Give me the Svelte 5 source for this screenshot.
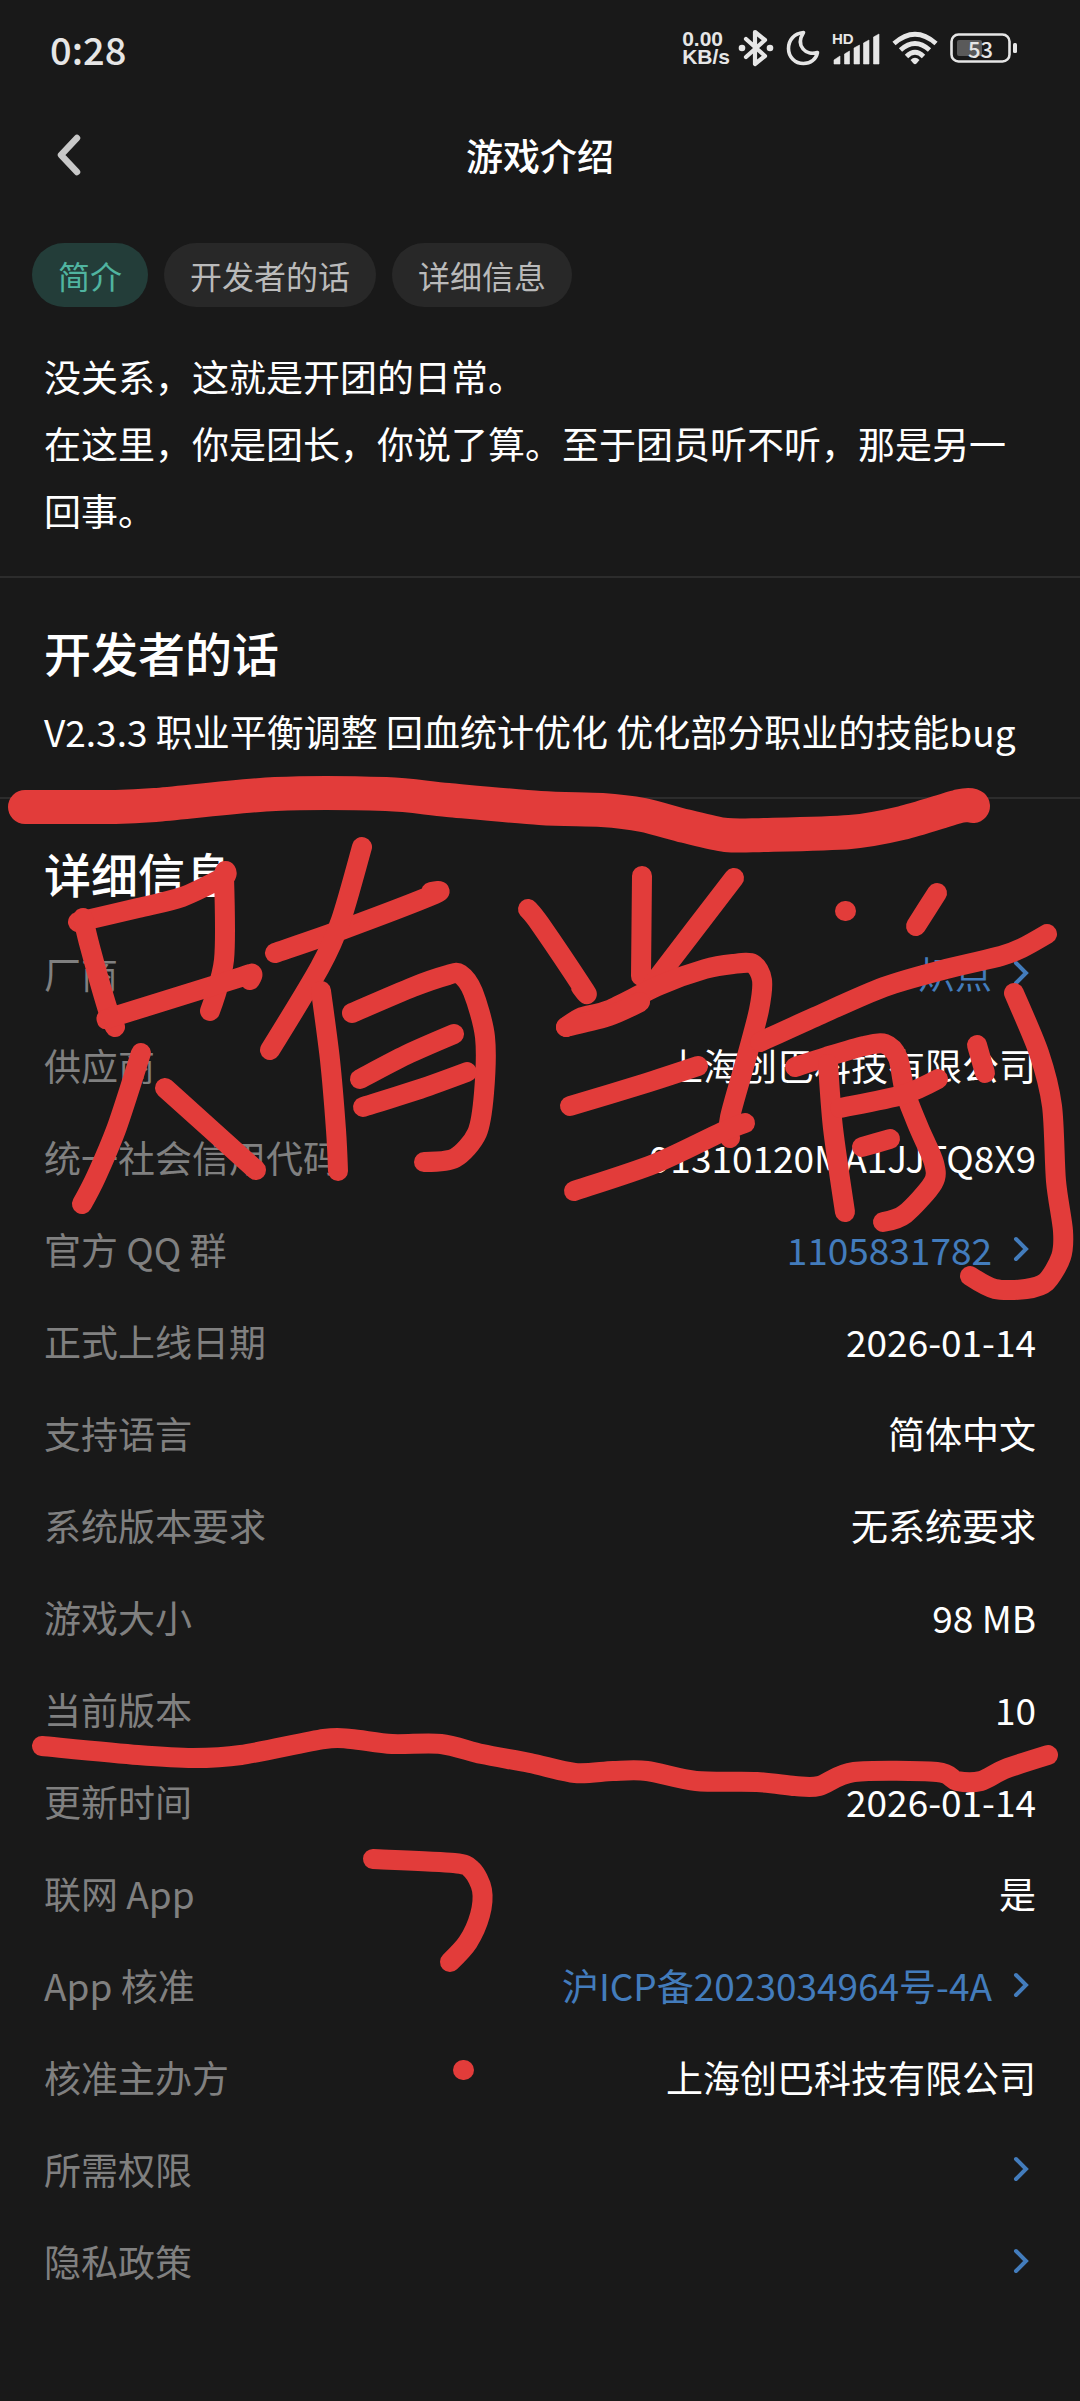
<script>
  const tabs = ['简介', '开发者的话', '详细信息'];
  let active = $state('简介');

  const rows = [
    { label: '厂商', value: '炽点', link: true },
    { label: '供应商', value: '上海创巴科技有限公司' },
    { label: '统一社会信用代码', value: '91310120MA1JJTQ8X9' },
    { label: '官方 QQ 群', value: '1105831782', link: true },
    { label: '正式上线日期', value: '2026-01-14' },
    { label: '支持语言', value: '简体中文' },
    { label: '系统版本要求', value: '无系统要求' },
    { label: '游戏大小', value: '98 MB' },
    { label: '当前版本', value: '10' },
    { label: '更新时间', value: '2026-01-14' },
    { label: '联网 App', value: '是' },
    { label: 'App 核准', value: '沪ICP备2023034964号-4A', link: true },
    { label: '核准主办方', value: '上海创巴科技有限公司' },
    { label: '所需权限', value: '', link: true },
    { label: '隐私政策', value: '', link: true }
  ];

  // pen strokes, a repeated point makes a sharp corner
  const marker = [
    [25, 807], [110, 807], [155, 805], [275, 794], [386, 794], [448, 800], [540, 808], [602, 810],
    [643, 815], [685, 826], [726, 835], [764, 835], [850, 832], [902, 823], [960, 806], [973, 806]
  ];

  const strokes = [
    [[78, 922], [138, 908], [182, 897], [224, 877], [224, 877], [224, 960], [210, 1011]],
    [[83, 918], [90, 947], [107, 1007], [115, 1027]],
    [[107, 1019], [119, 1015], [238, 978], [252, 974], [250, 980]],
    [[141, 1053], [117, 1127], [96, 1177], [82, 1204]],
    [[165, 1088], [256, 1170]],
    [[275, 953], [344, 929], [435, 894], [431, 892]],
    [[362, 847], [341, 920], [320, 967], [270, 1050]],
    [[321, 991], [330, 1060], [336, 1130], [338, 1171]],
    [[352, 1013], [413, 987], [448, 975], [460, 974], [473, 992], [485, 1037], [484, 1093], [477, 1133], [455, 1158], [424, 1162]],
    [[360, 1079], [406, 1055], [454, 1034]],
    [[363, 1107], [420, 1089], [467, 1072]],
    [[528, 909], [540, 924], [585, 991], [581, 987]],
    [[642, 876], [641, 976]],
    [[734, 878], [652, 985]],
    [[566, 1027], [582, 1017], [609, 1010], [660, 985], [705, 969], [733, 964], [753, 964], [762, 980], [759, 1010], [747, 1056], [730, 1117], [730, 1138]],
    [[566, 1027], [609, 1016], [640, 1002]],
    [[570, 1106], [643, 1084], [698, 1066]],
    [[574, 1191], [654, 1164], [722, 1132], [745, 1123]],
    [[845, 911], [846, 911]],
    [[937, 893], [916, 926]],
    [[760, 1042], [815, 1017], [884, 987], [946, 969], [1001, 956], [1022, 948], [1047, 934]],
    [[795, 1067], [826, 1057], [864, 1046], [885, 1044], [898, 1058], [905, 1092], [919, 1128], [934, 1163], [933, 1183], [905, 1214], [883, 1222]],
    [[828, 1064], [833, 1128], [845, 1212]],
    [[840, 1108], [902, 1095], [938, 1079]],
    [[862, 1147], [890, 1139]],
    [[977, 1045], [985, 1073]],
    [[1014, 993], [1039, 1053], [1052, 1106], [1056, 1181], [1063, 1231], [1061, 1257], [1046, 1282], [1026, 1289], [995, 1289], [970, 1276]],
    [[42, 1746], [138, 1755], [193, 1758], [241, 1755], [324, 1739], [351, 1739], [392, 1744], [441, 1744], [482, 1754], [530, 1763], [575, 1773], [613, 1771], [647, 1771], [696, 1781], [757, 1782], [795, 1786], [819, 1786], [854, 1772], [937, 1772], [957, 1781], [981, 1781], [1005, 1769], [1048, 1755]],
    [[373, 1859], [454, 1863], [472, 1870], [482, 1890], [480, 1915], [468, 1942], [450, 1962]],
    [[463, 2070], [464, 2070]]
  ];

  function smooth(points) {
    let d = `M${points[0][0]} ${points[0][1]}`;
    for (let i = 0; i < points.length - 1; i++) {
      const p0 = points[i - 1] || points[i];
      const p1 = points[i];
      const p2 = points[i + 1];
      const p3 = points[i + 2] || p2;
      const sharpStart = i > 0 && p0[0] === p1[0] && p0[1] === p1[1];
      const sharpEnd = p3[0] === p2[0] && p3[1] === p2[1];
      const a = sharpStart ? p1 : [p1[0] + (p2[0] - p0[0]) / 7, p1[1] + (p2[1] - p0[1]) / 7];
      const b = sharpEnd ? p2 : [p2[0] - (p3[0] - p1[0]) / 7, p2[1] - (p3[1] - p1[1]) / 7];
      d += ` C${a[0]} ${a[1]} ${b[0]} ${b[1]} ${p2[0]} ${p2[1]}`;
    }
    return d;
  }
</script>

<div class="screen">
  <div class="status">
    <span class="clock">0:28</span>
    <div class="indicators">
      <div class="speed"><span>0.00</span><span>KB/s</span></div>
      <svg width="36" height="38" viewBox="0 0 36 38" aria-hidden="true">
        <path d="M8 10 L27 27 L17 35 V3 L27 11 L8 28" fill="none" stroke="currentColor" stroke-width="4.2" stroke-linejoin="round" stroke-linecap="round" />
        <circle cx="4" cy="19" r="3.3" fill="currentColor" />
        <circle cx="32" cy="19" r="3.3" fill="currentColor" />
      </svg>
      <svg width="34" height="36" viewBox="0 0 34 36" aria-hidden="true">
        <path d="M17.500 2.500 C8 3.500 2.500 10 2.500 18.500 C2.500 27 9 33.500 17.500 33.500 C24.500 33.500 30 29.500 31.500 22.500 C20 26 9 16 17.500 2.500 Z" fill="none" stroke="currentColor" stroke-width="3.6" stroke-linejoin="round" />
      </svg>
      <div class="signal">
        <span class="hd">HD</span>
        <svg width="48" height="34" viewBox="0 0 48 34" aria-hidden="true">
          <path d="M2 29 L8 25 V33 H2 Z M12.500 23 L17.500 20 V33 H12.500 Z M22 17 L27.500 14 V33 H22 Z M31.500 12 L37 9 V33 H31.500 Z M41.500 6 L47 3 V33 H41.500 Z" fill="currentColor" stroke="currentColor" stroke-width="0.6" stroke-linejoin="round" />
        </svg>
      </div>
      <svg width="46" height="34" viewBox="0 0 46 34" aria-hidden="true">
        <g fill="none" stroke="currentColor" stroke-width="4.8">
          <path d="M2 12.500 Q23 -6 44 12.500" />
          <path d="M8.500 19 Q23 6 37.500 19" />
          <path d="M14.500 25.500 Q23 17 31.500 25.500" />
        </g>
        <path d="M18.500 29 Q23 24.500 27.500 29 L24.500 32.500 Q23 34 21.500 32.500 Z" fill="currentColor" />
      </svg>
      <div class="battery">
        <svg width="68" height="30" viewBox="0 0 68 30" aria-hidden="true">
          <rect x="1.500" y="1.500" width="58" height="27" rx="7" fill="none" stroke="currentColor" stroke-width="2.6" />
          <rect x="7" y="7" width="25" height="16" rx="2" fill="#5a5a5a" />
          <rect x="63" y="10" width="4" height="10" rx="1.500" fill="currentColor" />
        </svg>
        <span class="level">53</span>
      </div>
    </div>
  </div>

  <header>
    <button class="back" aria-label="返回">
      <svg width="26" height="42" viewBox="0 0 26 42" aria-hidden="true">
        <path d="M21 4 L5 21 L21 38" fill="none" stroke="currentColor" stroke-width="6.500" stroke-linecap="round" stroke-linejoin="round" />
      </svg>
    </button>
    <h1>游戏介绍</h1>
  </header>

  <nav>
    {#each tabs as tab}
      <button class="tab" class:active={active === tab} onclick={() => (active = tab)}>{tab}</button>
    {/each}
  </nav>

  <section class="intro">
    <p>没关系，这就是开团的日常。<br />在这里，你是团长，你说了算。至于团员听不听，那是另一回事。</p>
  </section>

  <section>
    <h2>开发者的话</h2>
    <p>V2.3.3 职业平衡调整 回血统计优化 优化部分职业的技能bug</p>
  </section>

  <section class="details">
    <h2>详细信息</h2>
    <dl>
      {#each rows as row}
        <div class="row">
          <dt>{row.label}</dt>
          <dd>
            {#if row.link}
              <a href="#detail" aria-label={row.value || row.label}>
                {row.value}
                <svg width="44" height="28" viewBox="0 0 44 28" aria-hidden="true">
                  <path d="M24 4 L34 14 L24 24" fill="none" stroke="currentColor" stroke-width="4" stroke-linecap="round" />
                </svg>
              </a>
            {:else}
              {row.value}
            {/if}
          </dd>
        </div>
      {/each}
    </dl>
  </section>

  <svg class="ink" viewBox="0 0 1080 2401" aria-hidden="true">
    <path d={smooth(marker)} stroke-width="34" />
    {#each strokes as stroke}
      <path d={smooth(stroke)} stroke-width="20" />
    {/each}
  </svg>
</div>

<style>
  :global(body) {
    background: #191919;
  }

  .screen {
    position: relative;
    min-height: 100vh;
    overflow: hidden;
    background: #191919;
    color: #fff;
    font-family: 'Noto Sans CJK SC', sans-serif;
    font-size: 37px;
  }

  .status {
    display: flex;
    align-items: center;
    justify-content: space-between;
    height: 96px;
    padding: 0 62px 0 50px;
    color: #e6e6e6;
  }

  .clock {
    font-size: 38px;
    font-weight: 500;
  }

  .indicators {
    display: flex;
    align-items: center;
    gap: 12px;
  }

  .speed {
    display: flex;
    flex-direction: column;
    margin-right: -4px;
    font-family: 'Liberation Sans', sans-serif;
    font-size: 21px;
    font-weight: 700;
    line-height: 18px;
  }

  .signal,
  .battery {
    display: flex;
    position: relative;
  }

  .hd {
    position: absolute;
    top: 0;
    left: 0;
    font-family: 'Liberation Sans', sans-serif;
    font-size: 15px;
    font-weight: 700;
    line-height: 16px;
  }

  .level {
    position: absolute;
    top: 0;
    left: 18px;
    font-size: 22px;
    font-weight: 500;
    line-height: 30px;
  }

  header {
    display: grid;
    grid-template-columns: 1fr auto 1fr;
    align-items: center;
    height: 118px;
    padding: 0 44px;
  }

  h1 {
    margin: 0;
    font-size: 37px;
    font-weight: 500;
  }

  button {
    border: 0;
    font-family: inherit;
    cursor: pointer;
  }

  .back {
    display: flex;
    justify-self: start;
    padding: 12px;
    background: none;
    color: #c8c8c8;
  }

  nav {
    display: flex;
    gap: 16px;
    padding: 29px 32px 0;
  }

  .tab {
    height: 64px;
    padding: 0 26px;
    border-radius: 32px;
    background: #282828;
    color: #bababa;
    font-size: 32px;
  }

  .tab.active {
    background: #233d39;
    color: #50b4a0;
  }

  section {
    padding: 44px 44px 32px;
    border-bottom: 2px solid #2c2c2c;
  }

  .intro {
    padding-top: 36px;
  }

  .details {
    border-bottom: 0;
  }

  h2 {
    margin: 0 0 16px;
    font-size: 47px;
    font-weight: 500;
    line-height: 60px;
  }

  p {
    margin: 0;
    line-height: 67px;
  }

  .details h2 {
    margin-bottom: 24px;
  }

  dl {
    margin: 0;
  }

  .row {
    display: flex;
    align-items: center;
    justify-content: space-between;
    height: 92px;
  }

  dt {
    color: #808080;
  }

  dd {
    margin: 0;
  }

  a {
    display: flex;
    align-items: center;
    color: #437cbc;
    text-decoration: none;
  }

  .ink {
    position: absolute;
    top: 0;
    left: 0;
    width: 100%;
    pointer-events: none;
    fill: none;
    stroke: #e23c3a;
    stroke-linecap: round;
    stroke-linejoin: round;
  }
</style>
